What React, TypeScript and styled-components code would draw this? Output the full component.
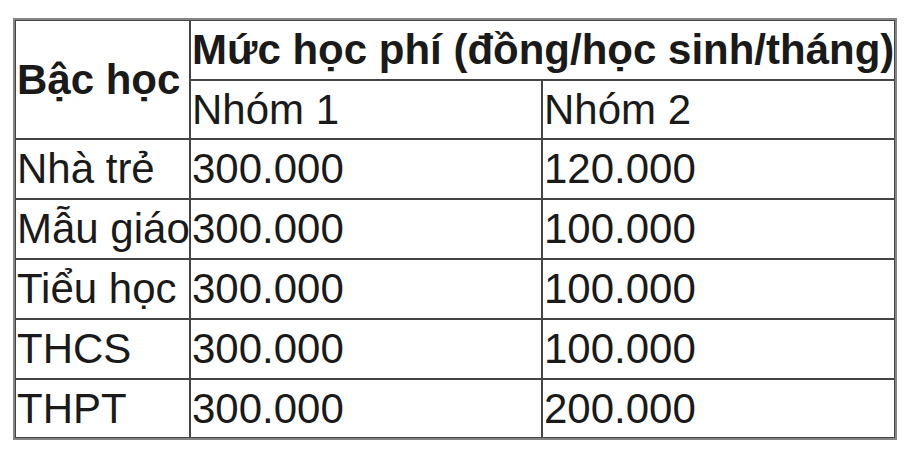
import React from "react";
import styled, { createGlobalStyle } from "styled-components";

const Global = createGlobalStyle`
  html, body { margin: 0; padding: 0; background: #ffffff; }
  body { font-family: "Liberation Sans", Arial, sans-serif; color: #1a1a1a; }
`;

const Page = styled.div`
  padding: 18px 0 0 13px;
`;

const Table = styled.table`
  border-collapse: separate;
  border-spacing: 0;
  table-layout: fixed;
  width: 884px;
  border: 2px solid #858585;
  font-size: 42px;
`;

const Cell = styled.td<{ $bold?: boolean; $h?: number }>`
  border: 1px solid #444444;
  padding: 0 0 0 1px;
  height: ${(p) => (p.$h ?? 60) - 2}px;
  font-weight: ${(p) => (p.$bold ? 700 : 400)};
  white-space: nowrap;
  vertical-align: middle;
  line-height: 48px;
  overflow: hidden;
`;

const rows: [string, string, string][] = [
  ["Nhà trẻ", "300.000", "120.000"],
  ["Mẫu giáo", "300.000", "100.000"],
  ["Tiểu học", "300.000", "100.000"],
  ["THCS", "300.000", "100.000"],
  ["THPT", "300.000", "200.000"],
];

export default function App() {
  return (
    <>
      <Global />
      <Page>
        <Table>
          <colgroup>
            <col style={{ width: 175 }} />
            <col style={{ width: 352 }} />
            <col style={{ width: 353 }} />
          </colgroup>
          <tbody>
            <tr>
              <Cell rowSpan={2} $bold $h={119}>Bậc học</Cell>
              <Cell colSpan={2} $bold $h={60}>Mức học phí (đồng/học sinh/tháng)</Cell>
            </tr>
            <tr>
              <Cell $h={59}>Nhóm 1</Cell>
              <Cell $h={59}>Nhóm 2</Cell>
            </tr>
            {rows.map((r, i) => (
              <tr key={r[0]}>
                <Cell $h={i === rows.length - 1 ? 59 : 60}>{r[0]}</Cell>
                <Cell $h={i === rows.length - 1 ? 59 : 60}>{r[1]}</Cell>
                <Cell $h={i === rows.length - 1 ? 59 : 60}>{r[2]}</Cell>
              </tr>
            ))}
          </tbody>
        </Table>
      </Page>
    </>
  );
}
